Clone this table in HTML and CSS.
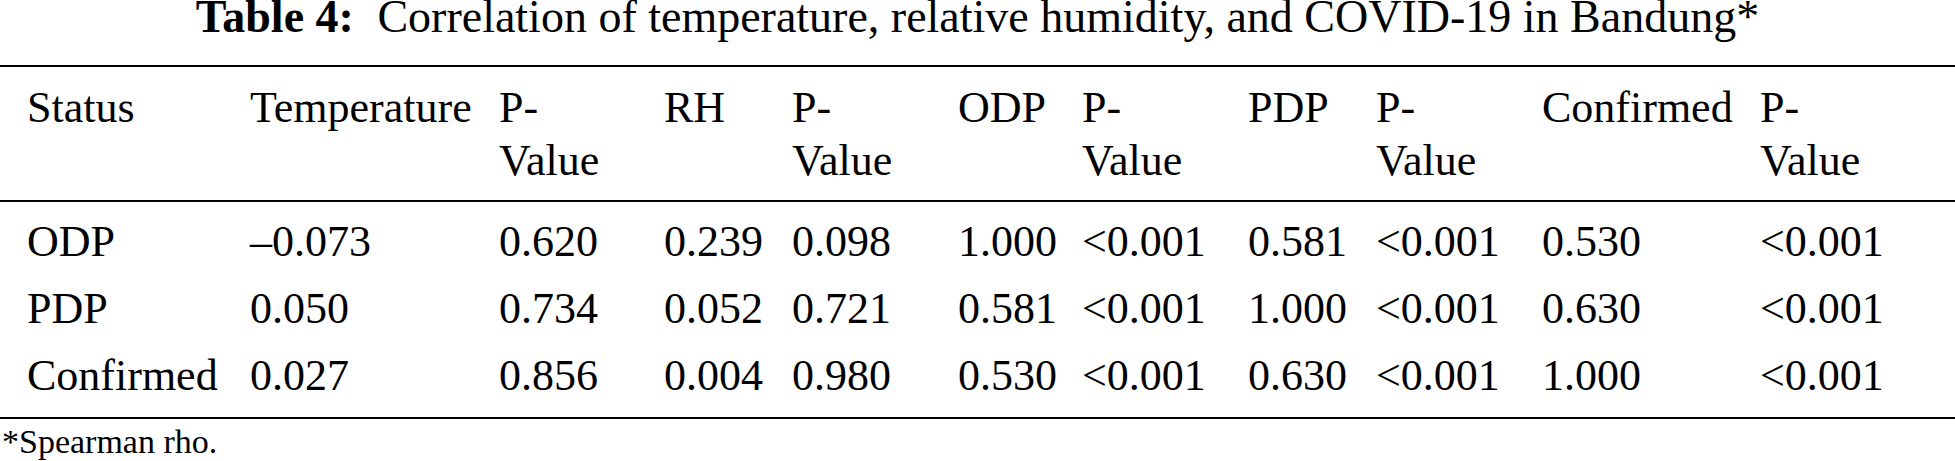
FILE: index.html
```html
<!DOCTYPE html>
<html>
<head>
    <link rel="stylesheet" href="styles.css">
</head>
<body>
    <div class="page">
        <p class="caption"><span class="caption-label">Table 4:</span> Correlation of temperature, relative humidity, and COVID-19 in Bandung*</p>
        <table class="data-table">
            <colgroup>
                <col class="col-status">
                <col class="col-temp">
                <col class="col-p1">
                <col class="col-rh">
                <col class="col-p2">
                <col class="col-odp">
                <col class="col-p3">
                <col class="col-pdp">
                <col class="col-p4">
                <col class="col-conf">
                <col class="col-p5">
            </colgroup>
            <thead>
                <tr>
                    <th>Status</th>
                    <th>Temperature</th>
                    <th>P-<br>Value</th>
                    <th>RH</th>
                    <th>P-<br>Value</th>
                    <th>ODP</th>
                    <th>P-<br>Value</th>
                    <th>PDP</th>
                    <th>P-<br>Value</th>
                    <th>Confirmed</th>
                    <th>P-<br>Value</th>
                </tr>
            </thead>
            <tbody>
                <tr>
                    <td>ODP</td>
                    <td>&ndash;0.073</td>
                    <td>0.620</td>
                    <td>0.239</td>
                    <td>0.098</td>
                    <td>1.000</td>
                    <td>&lt;0.001</td>
                    <td>0.581</td>
                    <td>&lt;0.001</td>
                    <td>0.530</td>
                    <td>&lt;0.001</td>
                </tr>
                <tr>
                    <td>PDP</td>
                    <td>0.050</td>
                    <td>0.734</td>
                    <td>0.052</td>
                    <td>0.721</td>
                    <td>0.581</td>
                    <td>&lt;0.001</td>
                    <td>1.000</td>
                    <td>&lt;0.001</td>
                    <td>0.630</td>
                    <td>&lt;0.001</td>
                </tr>
                <tr>
                    <td>Confirmed</td>
                    <td>0.027</td>
                    <td>0.856</td>
                    <td>0.004</td>
                    <td>0.980</td>
                    <td>0.530</td>
                    <td>&lt;0.001</td>
                    <td>0.630</td>
                    <td>&lt;0.001</td>
                    <td>1.000</td>
                    <td>&lt;0.001</td>
                </tr>
            </tbody>
        </table>
        <p class="table-note">*Spearman rho.</p>
    </div>
</body>
</html>
```

FILE: styles.css
```css
/* page reset - white sheet, no body margin */
html {
    overflow: hidden;
}

body {
    margin: 0;
    background: #fff;
    color: #000;
    font-family: "Liberation Serif", "Times New Roman", serif;
}

.page {
    width: 1955px;
}

/* table caption, centered over the table */
.caption {
    margin: 0 0 31px;
    font-size: 46px;
    line-height: 34px;
    text-align: center;
    white-space: nowrap;
}

.caption-label {
    font-weight: bold;
    margin-right: 12px;
}

/* main table - thick rules top and bottom */
.data-table {
    width: 1955px;
    table-layout: fixed;
    border-collapse: separate;
    border-spacing: 0;
    border-top: 2px solid #000;
    border-bottom: 2px solid #000;
    font-size: 44px;
}

.data-table th,
.data-table td {
    padding: 0 0 0 27px;
    text-align: left;
    vertical-align: top;
    white-space: nowrap;
}

.data-table th {
    font-weight: normal;
    line-height: 53px;
    padding-top: 14px;
    padding-bottom: 13px;
    border-bottom: 2px solid #000;
}

.data-table td {
    line-height: 67px;
}

/* a little breathing room above the first and below the last row */
.data-table tbody tr:first-child td {
    padding-top: 6px;
}

.data-table tbody tr:last-child td {
    padding-bottom: 8px;
}

/* column widths */
.col-status { width: 223px; }
.col-temp   { width: 249px; }
.col-p1     { width: 165px; }
.col-rh     { width: 128px; }
.col-p2     { width: 166px; }
.col-odp    { width: 124px; }
.col-p3     { width: 166px; }
.col-pdp    { width: 128px; }
.col-p4     { width: 166px; }
.col-conf   { width: 218px; }
.col-p5     { width: 222px; }

/* footnote under the table */
.table-note {
    margin: 5px 0 0 2px;
    font-size: 34px;
    line-height: 36px;
}
```
